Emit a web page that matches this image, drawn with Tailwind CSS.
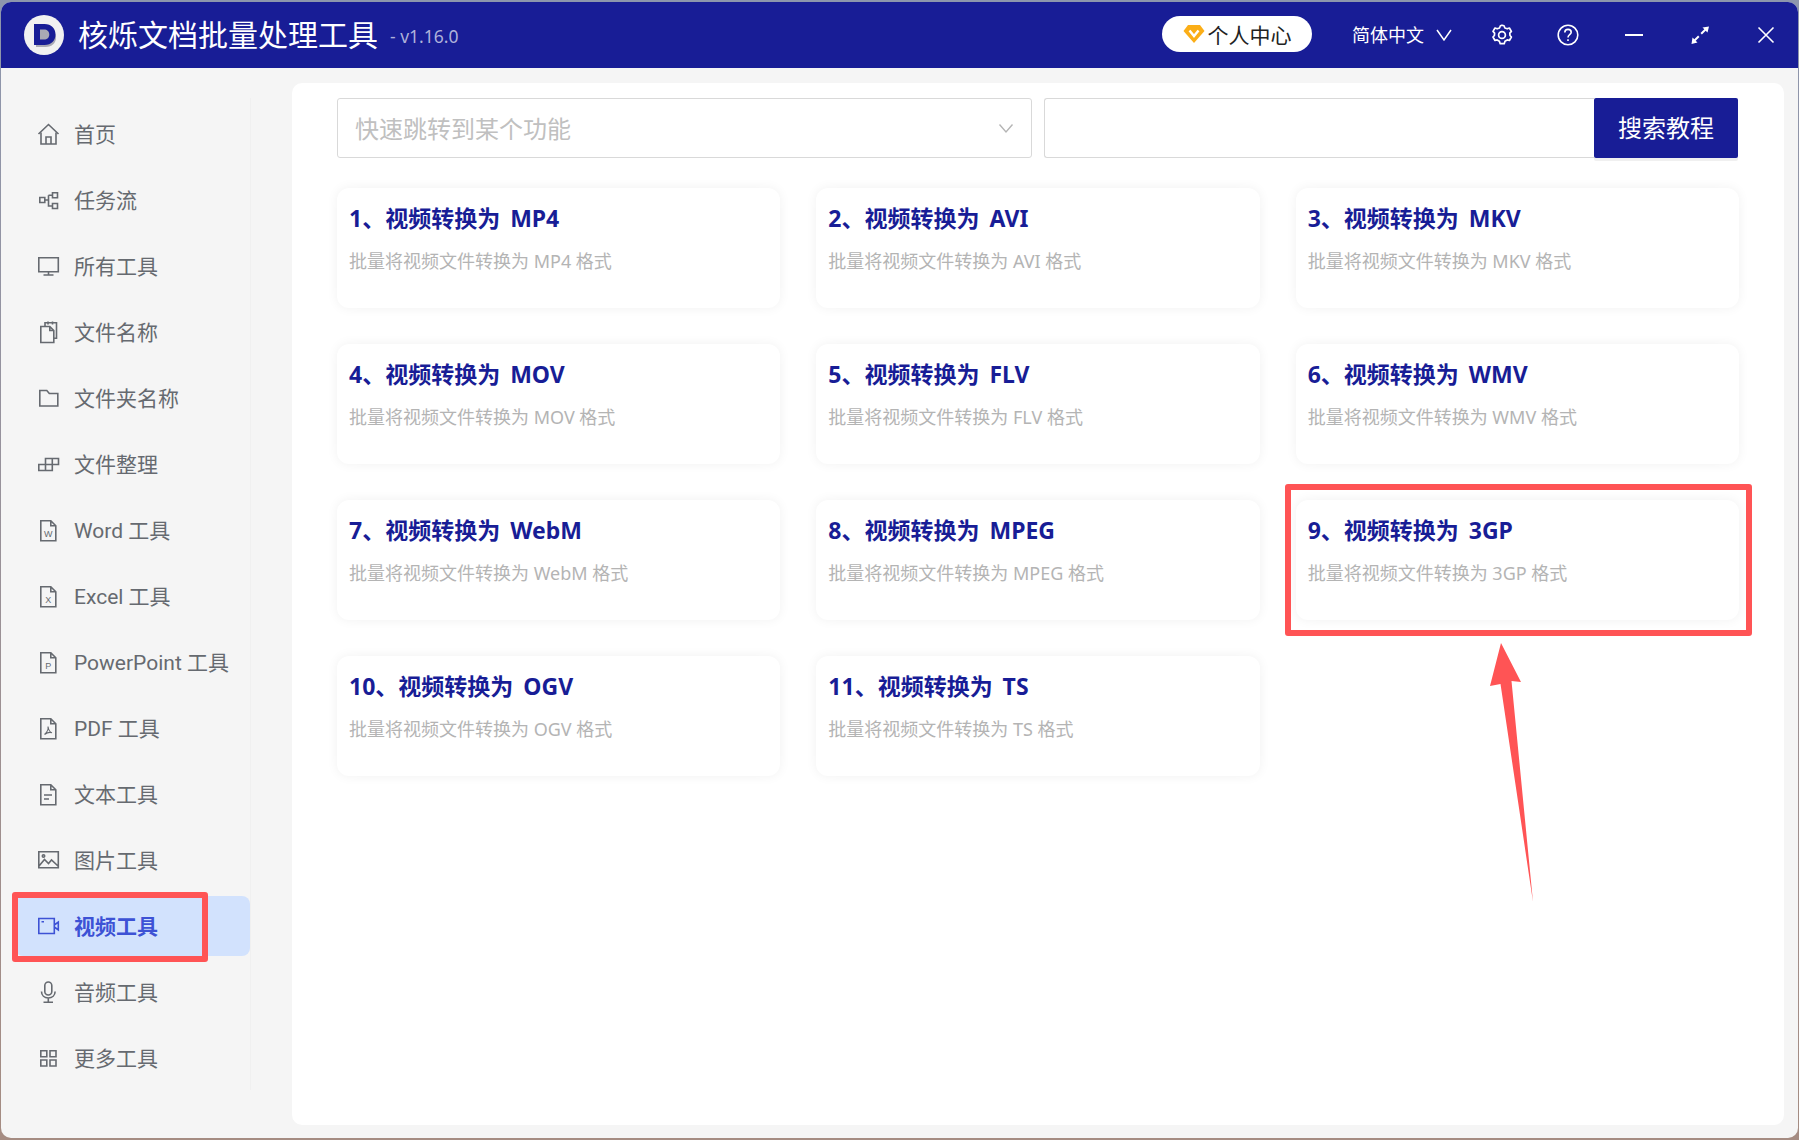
<!DOCTYPE html>
<html lang="zh-CN">

<head>
    <meta charset="UTF-8">
    <title>核烁文档批量处理工具</title>
    <script src="https://cdn.jsdelivr.net/npm/@tailwindcss/browser@4"></script>
</head>

<body class="font-['Noto_Sans','Noto_Sans_CJK_SC',sans-serif] overflow-hidden">
    <div class="relative w-[1799px] h-[1140px] pt-[2px] pl-[1px] bg-linear-to-b from-[#8d96ad] to-[#a58c82]">
        <div class="w-[1797px] h-[1136px] rounded-[10px] overflow-hidden bg-[#f5f5f5] flex flex-col">

            <!-- Header -->
            <header class="h-[66px] shrink-0 bg-[#181d96] flex items-center pl-[23px] pr-[20px] text-white">
                <svg class="w-[40px] h-[42px]" viewBox="0 0 40 42">
                    <circle cx="20" cy="21" r="20" fill="#f1f1f1" />
                    <path d="M11 12.5h9.5c6.5 0 10.500 4 10.500 9.500s-4 9.500-10.500 9.500H11z" fill="#a9a9b4" transform="translate(1 1.500)" />
                    <path fill-rule="evenodd" d="M10 10h10.500c6.800 0 11 4.500 11 10.500S27.300 31 20.500 31H10zM16 15.500v10h4c3.200 0 5.300-2 5.300-5s-2.100-5-5.300-5z" fill="#181d96" />
                </svg>
                <span class="ml-[14px] text-[30px] leading-none">核烁文档批量处理工具</span>
                <span class="ml-[12px] mt-[3px] text-[17.5px] text-[#aeb1da]">- v1.16.0</span>

                <div class="ml-auto mr-[1px] w-[150px] h-[36px] mb-[2px] rounded-full bg-white flex items-center justify-center gap-[3px] text-[21px] text-[#222]">
                    <svg class="w-[22px] h-[20px]" viewBox="0 0 22 20">
                        <path d="M5 1h12l4.500 6L11 19 .5 7z" fill="#fbae17" />
                        <path d="M6.500 6.500 11 12l4.500-5.500" fill="none" stroke="#fff" stroke-width="2.400" />
                    </svg>
                    <span class="pt-[3px]">个人中心</span>
                </div>
                <span class="ml-[39px] text-[18px]">简体中文</span>
                <svg class="ml-[8px] w-[24px] h-[24px]" viewBox="0 0 24 24" fill="none" stroke="#fff" stroke-width="1.500">
                    <path d="M5 7l7 10 7-10" />
                </svg>
                <svg class="ml-[34px] w-[24px] h-[24px]" viewBox="0 0 24 24" fill="none" stroke="#fff" stroke-width="1.700" stroke-linejoin="round">
                    <path d="M12 2.200l2 .6.900 2.200 2.300.8 2.200-.8 2 3.400-1.600 1.700.2 2.400 1.400 1.500-2 3.500-2.200-.6-2.200 1.300-.8 2.500h-4l-.8-2.500-2.200-1.300-2.200.6-2-3.500 1.400-1.500.2-2.400-1.600-1.700 2-3.400 2.200.8 2.300-.8.900-2.200z" />
                    <circle cx="12" cy="12" r="3.400" />
                </svg>
                <svg class="ml-[42px] w-[24px] h-[24px]" viewBox="0 0 24 24" fill="none" stroke="#fff" stroke-width="1.600">
                    <circle cx="12" cy="12" r="9.800" />
                    <path d="M8.800 9.600c0-2 1.400-3.200 3.200-3.200s3.200 1.200 3.200 2.900c0 2.400-3.200 2.500-3.200 5.200" />
                    <path d="M12 16.300v1.800" />
                </svg>
                <svg class="ml-[42px] w-[24px] h-[24px]" viewBox="0 0 24 24" fill="none" stroke="#fff" stroke-width="1.800">
                    <path d="M3 12h18" />
                </svg>
                <svg class="ml-[42px] w-[24px] h-[24px]" viewBox="0 0 24 24" fill="#fff">
                    <path d="M21 3.500l-6.500 1 1.800 1.800-3.800 3.800 1.400 1.400 3.800-3.800 1.800 1.800z" />
                    <path d="M3.500 21l1-6.500 1.800 1.800 3.800-3.800 1.400 1.400-3.800 3.800 1.800 1.800z" />
                </svg>
                <svg class="ml-[42px] w-[24px] h-[24px]" viewBox="0 0 24 24" fill="none" stroke="#fff" stroke-width="1.600">
                    <path d="M4.500 4.500l15 15M19.500 4.500l-15 15" />
                </svg>
            </header>

            <div class="flex flex-1 min-h-0">
                <!-- Sidebar -->
                <aside class="w-[250px] h-[992px] mt-[30px] shrink-0 border-r border-[#f0f0f0] pt-[6px] pl-[14px] flex flex-col gap-[6px] font-['Roboto','Noto_Sans_CJK_SC',sans-serif] text-[21px] text-[#666a70]">
                    <a class="h-[60px] flex items-center gap-[14px] pl-[21px]">
                        <svg class="w-[24px] h-[24px] shrink-0" viewBox="0 0 24 24" fill="none" stroke="#666a70" stroke-width="1.600">
                            <path d="M2.500 12 12.500 2.500 22.500 12" />
                            <path d="M5 10.500V22h15V10.500M10 22v-7h5v7" />
                        </svg>
                        <span class="pt-[4px]">首页</span>
                    </a>
                    <a class="h-[60px] flex items-center gap-[14px] pl-[21px]">
                        <svg class="w-[24px] h-[24px] shrink-0" viewBox="0 0 24 24" fill="none" stroke="#666a70" stroke-width="1.600">
                            <path d="M3.800 9.500h5v5h-5zM16.500 4.800h5v5h-5zM16.500 15.500h5v5h-5zM8.800 12h3.700M12.500 7.300h4M12.500 7.300V18h4" />
                        </svg>
                        <span class="pt-[4px]">任务流</span>
                    </a>
                    <a class="h-[60px] flex items-center gap-[14px] pl-[21px]">
                        <svg class="w-[24px] h-[24px] shrink-0" viewBox="0 0 24 24" fill="none" stroke="#666a70" stroke-width="1.600">
                            <path d="M2.800 3.800h19.500v14H2.800zM12.500 17.800v3M7.500 21h10" />
                        </svg>
                        <span class="pt-[4px]">所有工具</span>
                    </a>
                    <a class="h-[60px] flex items-center gap-[14px] pl-[21px]">
                        <svg class="w-[24px] h-[24px] shrink-0" viewBox="0 0 24 24" fill="none" stroke="#666a70" stroke-width="1.600">
                            <path d="M4.800 6.500v16h13V10.500l-4-4zM13.800 6.500v4h4" />
                            <path d="M9 6.500V2.800h11.500v15.500h-2.700M12 1.500v3M16.500 1.500v3" />
                        </svg>
                        <span class="pt-[4px]">文件名称</span>
                    </a>
                    <a class="h-[60px] flex items-center gap-[14px] pl-[21px]">
                        <svg class="w-[24px] h-[24px] shrink-0" viewBox="0 0 24 24" fill="none" stroke="#666a70" stroke-width="1.600">
                            <path d="M3.800 4.500h7l2.500 3h8.500v12.500H3.800z" />
                        </svg>
                        <span class="pt-[4px]">文件夹名称</span>
                    </a>
                    <a class="h-[60px] flex items-center gap-[14px] pl-[21px]">
                        <svg class="w-[24px] h-[24px] shrink-0" viewBox="0 0 24 24" fill="none" stroke="#666a70" stroke-width="1.600">
                            <path d="M2.800 12.500h13.500v6H2.800zM9.500 12.500v6M9.500 12.500v-6h13v6h-6.200M16.300 6.500v6" />
                        </svg>
                        <span class="pt-[4px]">文件整理</span>
                    </a>
                    <a class="h-[60px] flex items-center gap-[14px] pl-[21px]">
                        <svg class="w-[24px] h-[24px] shrink-0" viewBox="0 0 24 24" fill="none" stroke="#666a70" stroke-width="1.600">
                            <path d="M4.800 2.800h10l5 5v15h-15zM14.800 2.800v5h5" />
                            <text x="12.300" y="18.500" font-size="9" fill="#666a70" stroke="none" text-anchor="middle" font-family="Liberation Sans">W</text>
                        </svg>
                        <span class="pt-[4px]">Word 工具</span>
                    </a>
                    <a class="h-[60px] flex items-center gap-[14px] pl-[21px]">
                        <svg class="w-[24px] h-[24px] shrink-0" viewBox="0 0 24 24" fill="none" stroke="#666a70" stroke-width="1.600">
                            <path d="M4.800 2.800h10l5 5v15h-15zM14.800 2.800v5h5" />
                            <text x="12.300" y="18.500" font-size="9" fill="#666a70" stroke="none" text-anchor="middle" font-family="Liberation Sans">X</text>
                        </svg>
                        <span class="pt-[4px]">Excel 工具</span>
                    </a>
                    <a class="h-[60px] flex items-center gap-[14px] pl-[21px]">
                        <svg class="w-[24px] h-[24px] shrink-0" viewBox="0 0 24 24" fill="none" stroke="#666a70" stroke-width="1.600">
                            <path d="M4.800 2.800h10l5 5v15h-15zM14.800 2.800v5h5" />
                            <text x="12.300" y="18.500" font-size="9" fill="#666a70" stroke="none" text-anchor="middle" font-family="Liberation Sans">P</text>
                        </svg>
                        <span class="pt-[4px]">PowerPoint 工具</span>
                    </a>
                    <a class="h-[60px] flex items-center gap-[14px] pl-[21px]">
                        <svg class="w-[24px] h-[24px] shrink-0" viewBox="0 0 24 24" fill="none" stroke="#666a70" stroke-width="1.600">
                            <path d="M4.800 2.800h10l5 5v15h-15zM14.800 2.800v5h5" />
                            <path d="M12 10.500c.5 3-1.500 6.500-3.500 8 2-1.500 5.500-2.500 7.500-1.800-2-.5-3.500-3-4-6.200z" stroke-width="1.100" />
                        </svg>
                        <span class="pt-[4px]">PDF 工具</span>
                    </a>
                    <a class="h-[60px] flex items-center gap-[14px] pl-[21px]">
                        <svg class="w-[24px] h-[24px] shrink-0" viewBox="0 0 24 24" fill="none" stroke="#666a70" stroke-width="1.600">
                            <path d="M4.800 2.800h10l5 5v15h-15zM14.800 2.800v5h5M8 13h8M8 17h5" />
                        </svg>
                        <span class="pt-[4px]">文本工具</span>
                    </a>
                    <a class="h-[60px] flex items-center gap-[14px] pl-[21px]">
                        <svg class="w-[24px] h-[24px] shrink-0" viewBox="0 0 24 24" fill="none" stroke="#666a70" stroke-width="1.600">
                            <path d="M2.800 3.800h19.500v16H2.800zM3 18l5.500-6.500 4 4 3-3.500 6.500 6" />
                            <circle cx="7.500" cy="8" r="1.200" />
                        </svg>
                        <span class="pt-[4px]">图片工具</span>
                    </a>
                    <a class="h-[60px] flex items-center gap-[14px] pl-[21px] rounded-lg bg-[#d2e2fd] font-bold text-[#3d52d5]">
                        <svg class="w-[24px] h-[24px] shrink-0" viewBox="0 0 24 24" fill="none" stroke="#3d52d5" stroke-width="1.600">
                            <path d="M2.800 4.500h15.500v15H2.800zM18.300 11l4-3v8l-4-3M5.500 7.800h2.500" />
                        </svg>
                        <span class="pt-[4px]">视频工具</span>
                    </a>
                    <a class="h-[60px] flex items-center gap-[14px] pl-[21px]">
                        <svg class="w-[24px] h-[24px] shrink-0" viewBox="0 0 24 24" fill="none" stroke="#666a70" stroke-width="1.600">
                            <rect x="8.800" y="2" width="7" height="13" rx="3.500" />
                            <path d="M5.500 11.500c0 4 3 6.500 6.800 6.500s6.800-2.500 6.800-6.500M12.300 18v4M7.500 22.300h9.500" />
                        </svg>
                        <span class="pt-[4px]">音频工具</span>
                    </a>
                    <a class="h-[60px] flex items-center gap-[14px] pl-[21px]">
                        <svg class="w-[24px] h-[24px] shrink-0" viewBox="0 0 24 24" fill="none" stroke="#666a70" stroke-width="1.600">
                            <path d="M4.800 4.800h6v6h-6zM14 4.800h6v6h-6zM4.800 14h6v6h-6zM14 14h6v6h-6z" />
                        </svg>
                        <span class="pt-[4px]">更多工具</span>
                    </a>
                </aside>

                <!-- Main -->
                <main class="ml-[41px] mt-[15px] w-[1492px] h-[1042px] rounded-[10px] bg-white pl-[45px] pt-[15px]">
                    <div class="w-[1401px] h-[60px] flex">
                        <div class="w-[695px] border border-[#d9d9d9] rounded-[3px] flex items-center justify-between pl-[17px] pr-[15px] text-[24px] text-[#c0c0c0]">
                            <span class="pt-[2px]">快速跳转到某个功能</span>
                            <svg class="w-[20px] h-[20px]" viewBox="0 0 20 20" fill="none" stroke="#b5b5b5" stroke-width="1.400">
                                <path d="M3.500 6.500 10 14l6.500-7.500" />
                            </svg>
                        </div>
                        <input type="text" class="ml-[12px] w-[550px] border border-r-0 border-[#d9d9d9] rounded-l-[3px] outline-none">
                        <button class="w-[144px] bg-[#181d96] rounded-[2px] text-white text-[24px] shadow-[0_3px_0_#f0f0f0]">搜索教程</button>
                    </div>

                    <!-- Cards -->
                    <div class="mt-[30px] w-[1402px] grid grid-cols-3 gap-[36px]">
                        <div class="h-[120px] rounded-xl bg-white shadow-[0_0_12px_rgba(0,0,0,0.06)] px-3 pt-3">
                            <h3 class="text-[23px] leading-[36px] font-bold text-[#181d96] [word-spacing:4px]">1、视频转换为 MP4</h3>
                            <p class="mt-[7px] text-[18px] leading-[36px] text-[#b4b4b4]">批量将视频文件转换为 MP4 格式</p>
                        </div>
                        <div class="h-[120px] rounded-xl bg-white shadow-[0_0_12px_rgba(0,0,0,0.06)] px-3 pt-3">
                            <h3 class="text-[23px] leading-[36px] font-bold text-[#181d96] [word-spacing:4px]">2、视频转换为 AVI</h3>
                            <p class="mt-[7px] text-[18px] leading-[36px] text-[#b4b4b4]">批量将视频文件转换为 AVI 格式</p>
                        </div>
                        <div class="h-[120px] rounded-xl bg-white shadow-[0_0_12px_rgba(0,0,0,0.06)] px-3 pt-3">
                            <h3 class="text-[23px] leading-[36px] font-bold text-[#181d96] [word-spacing:4px]">3、视频转换为 MKV</h3>
                            <p class="mt-[7px] text-[18px] leading-[36px] text-[#b4b4b4]">批量将视频文件转换为 MKV 格式</p>
                        </div>
                        <div class="h-[120px] rounded-xl bg-white shadow-[0_0_12px_rgba(0,0,0,0.06)] px-3 pt-3">
                            <h3 class="text-[23px] leading-[36px] font-bold text-[#181d96] [word-spacing:4px]">4、视频转换为 MOV</h3>
                            <p class="mt-[7px] text-[18px] leading-[36px] text-[#b4b4b4]">批量将视频文件转换为 MOV 格式</p>
                        </div>
                        <div class="h-[120px] rounded-xl bg-white shadow-[0_0_12px_rgba(0,0,0,0.06)] px-3 pt-3">
                            <h3 class="text-[23px] leading-[36px] font-bold text-[#181d96] [word-spacing:4px]">5、视频转换为 FLV</h3>
                            <p class="mt-[7px] text-[18px] leading-[36px] text-[#b4b4b4]">批量将视频文件转换为 FLV 格式</p>
                        </div>
                        <div class="h-[120px] rounded-xl bg-white shadow-[0_0_12px_rgba(0,0,0,0.06)] px-3 pt-3">
                            <h3 class="text-[23px] leading-[36px] font-bold text-[#181d96] [word-spacing:4px]">6、视频转换为 WMV</h3>
                            <p class="mt-[7px] text-[18px] leading-[36px] text-[#b4b4b4]">批量将视频文件转换为 WMV 格式</p>
                        </div>
                        <div class="h-[120px] rounded-xl bg-white shadow-[0_0_12px_rgba(0,0,0,0.06)] px-3 pt-3">
                            <h3 class="text-[23px] leading-[36px] font-bold text-[#181d96] [word-spacing:4px]">7、视频转换为 WebM</h3>
                            <p class="mt-[7px] text-[18px] leading-[36px] text-[#b4b4b4]">批量将视频文件转换为 WebM 格式</p>
                        </div>
                        <div class="h-[120px] rounded-xl bg-white shadow-[0_0_12px_rgba(0,0,0,0.06)] px-3 pt-3">
                            <h3 class="text-[23px] leading-[36px] font-bold text-[#181d96] [word-spacing:4px]">8、视频转换为 MPEG</h3>
                            <p class="mt-[7px] text-[18px] leading-[36px] text-[#b4b4b4]">批量将视频文件转换为 MPEG 格式</p>
                        </div>
                        <div class="h-[120px] rounded-xl bg-white shadow-[0_0_12px_rgba(0,0,0,0.06)] px-3 pt-3">
                            <h3 class="text-[23px] leading-[36px] font-bold text-[#181d96] [word-spacing:4px]">9、视频转换为 3GP</h3>
                            <p class="mt-[7px] text-[18px] leading-[36px] text-[#b4b4b4]">批量将视频文件转换为 3GP 格式</p>
                        </div>
                        <div class="h-[120px] rounded-xl bg-white shadow-[0_0_12px_rgba(0,0,0,0.06)] px-3 pt-3">
                            <h3 class="text-[23px] leading-[36px] font-bold text-[#181d96] [word-spacing:4px]">10、视频转换为 OGV</h3>
                            <p class="mt-[7px] text-[18px] leading-[36px] text-[#b4b4b4]">批量将视频文件转换为 OGV 格式</p>
                        </div>
                        <div class="h-[120px] rounded-xl bg-white shadow-[0_0_12px_rgba(0,0,0,0.06)] px-3 pt-3">
                            <h3 class="text-[23px] leading-[36px] font-bold text-[#181d96] [word-spacing:4px]">11、视频转换为 TS</h3>
                            <p class="mt-[7px] text-[18px] leading-[36px] text-[#b4b4b4]">批量将视频文件转换为 TS 格式</p>
                        </div>
                    </div>
                </main>
            </div>
        </div>

        <!-- Red annotations over the screenshot -->
        <div class="absolute left-[12px] top-[892px] w-[196px] h-[70px] border-[6px] border-[#ff5455] rounded-[3px]"></div>
        <div class="absolute left-[1285px] top-[484px] w-[467px] h-[152px] border-[6px] border-[#ff5455] rounded-[3px]"></div>
        <svg class="absolute left-[1480px] top-[640px] w-[60px] h-[265px]" viewBox="1480 640 60 265">
            <path d="M1501 643 1521 682 1511.500 681 1533 902 1500.500 684 1490 686z" fill="#ff5455" />
        </svg>
    </div>
</body>

</html>
